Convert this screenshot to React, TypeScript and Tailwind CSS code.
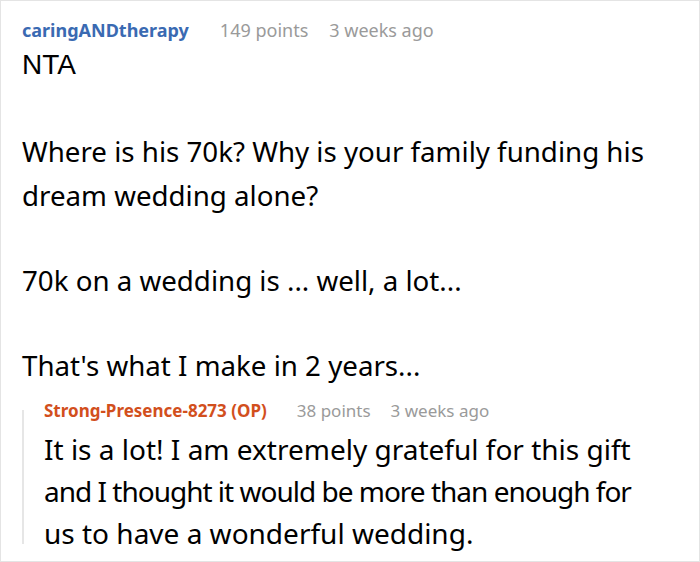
import React from "react";

const BODY = [
  "Where is his 70k? Why is your family funding his dream wedding alone?",
  "70k on a wedding is ... well, a lot...",
  "That's what I make in 2 years...",
];

// wrapped as in the source layout
const REPLY_LINES = [
  { text: "It is a lot! I am extremely grateful for this gift", cls: "" },
  { text: "and I thought it would be more than enough for", cls: "tracking-[-1px]" },
  { text: "us to have a wonderful wedding.", cls: "" },
];

export default function App() {
  return (
    <div
      className="w-[700px] h-[562px] overflow-hidden bg-white border border-[#e4e4e4] text-black"
      style={{ fontFamily: '"Noto Sans", "Open Sans", sans-serif' }}
    >
      {/* PARENT COMMENT */}
      <div className="pl-[21px] pr-[20px] pt-[17px]">
        <div className="flex items-baseline text-[18px] leading-[24px]">
          <span className="font-bold text-[#3a6ab2]">caringANDtherapy</span>
          <span className="ml-[31px] text-[#9a9a9a]">149 points</span>
          <span className="ml-[21px] text-[#9a9a9a]">3 weeks ago</span>
        </div>

        <div className="mt-[0px] text-[27.7px] leading-[44px] space-y-[41px]">
          <p className="text-[28px] leading-[46px]" style={{ fontFamily: '"Liberation Sans", Arial, sans-serif' }}>
            NTA
          </p>
          {BODY.map((p, i) => (
            <p key={i}>{p}</p>
          ))}
        </div>

        {/* REPLY */}
        <div className="mt-[13px] flex">
          <div className="w-[2px] mt-[10px] mb-[10px] bg-[#e6e6e6]" />
          <div className="pl-[20px] w-[622px]">
            <div className="flex items-baseline text-[17px] leading-[22px]">
              <span className="font-bold text-[#d24f1d]">Strong-Presence-8273 (OP)</span>
              <span className="ml-[30px] text-[#9a9a9a]">38 points</span>
              <span className="ml-[20px] text-[#9a9a9a]">3 weeks ago</span>
            </div>
            <div className="mt-[6px] text-[28px] leading-[42px] whitespace-nowrap">
              {REPLY_LINES.map((l, i) => (
                <div key={i} className={l.cls}>
                  {l.text}
                </div>
              ))}
            </div>
          </div>
        </div>
      </div>
    </div>
  );
}
